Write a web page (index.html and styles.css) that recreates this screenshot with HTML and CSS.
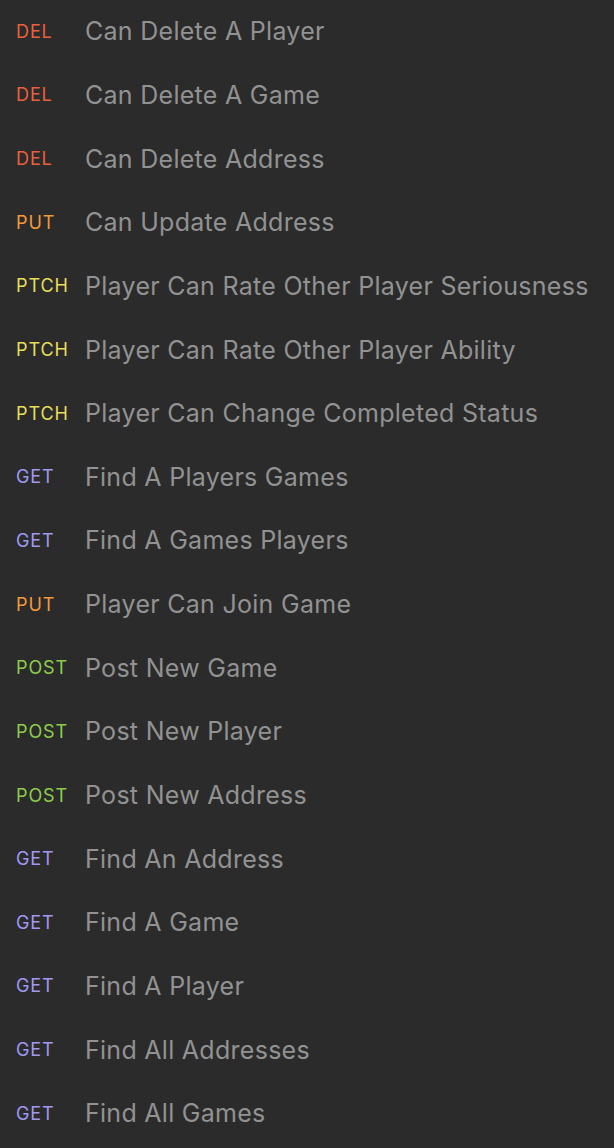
FILE: index.html
```html
<!DOCTYPE html>
<html>
<head>
<meta charset="utf-8">
<link rel="stylesheet" href="styles.css">
</head>
<body>
<ul class="list">
  <li class="row"><span class="method del">DEL</span><span class="name">Can Delete A Player</span></li>
  <li class="row"><span class="method del">DEL</span><span class="name">Can Delete A Game</span></li>
  <li class="row"><span class="method del">DEL</span><span class="name">Can Delete Address</span></li>
  <li class="row"><span class="method put">PUT</span><span class="name">Can Update Address</span></li>
  <li class="row"><span class="method ptch">PTCH</span><span class="name">Player Can Rate Other Player Seriousness</span></li>
  <li class="row"><span class="method ptch">PTCH</span><span class="name">Player Can Rate Other Player Ability</span></li>
  <li class="row"><span class="method ptch">PTCH</span><span class="name">Player Can Change Completed Status</span></li>
  <li class="row"><span class="method get">GET</span><span class="name">Find A Players Games</span></li>
  <li class="row"><span class="method get">GET</span><span class="name">Find A Games Players</span></li>
  <li class="row"><span class="method put">PUT</span><span class="name">Player Can Join Game</span></li>
  <li class="row"><span class="method post">POST</span><span class="name">Post New Game</span></li>
  <li class="row"><span class="method post">POST</span><span class="name">Post New Player</span></li>
  <li class="row"><span class="method post">POST</span><span class="name">Post New Address</span></li>
  <li class="row"><span class="method get">GET</span><span class="name">Find An Address</span></li>
  <li class="row"><span class="method get">GET</span><span class="name">Find A Game</span></li>
  <li class="row"><span class="method get">GET</span><span class="name">Find A Player</span></li>
  <li class="row"><span class="method get">GET</span><span class="name">Find All Addresses</span></li>
  <li class="row"><span class="method get">GET</span><span class="name">Find All Games</span></li>
</ul>
</body>
</html>
```
FILE: styles.css
```css
html, body {
  margin: 0;
  padding: 0;
  background: #2b2b2b;
  height: 100%;
  overflow: hidden;
}
body {
  font-family: Inter, "Noto Sans", sans-serif;
}
.list {
  list-style: none;
  margin: 0;
  padding: 0;
}
.row {
  height: 63.65px;
  display: flex;
  align-items: center;
  padding-left: 16px;
  padding-bottom: 1px;
  box-sizing: border-box;
  white-space: nowrap;
}
.method {
  width: 69px;
  flex: none;
  font-size: 18px;
  font-weight: 400;
  letter-spacing: 0.9px;
}
.name {
  font-size: 25px;
  letter-spacing: 0.28px;
  color: #929292;
}
.del { color: #e8603e; }
.put { color: #f29a3a; }
.ptch { color: #e6df5a; }
.get { color: #a199f0; }
.post { color: #8dcd4a; }
```
